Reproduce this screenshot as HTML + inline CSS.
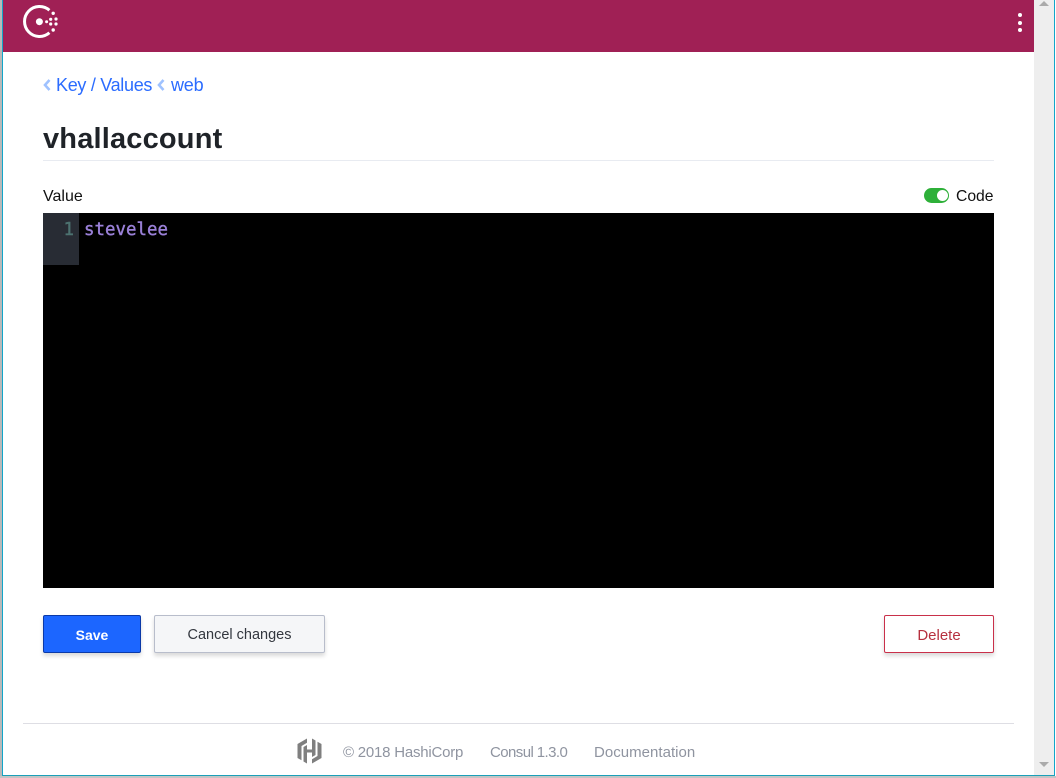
<!DOCTYPE html>
<html><head><meta charset="utf-8"><style>
html,body{margin:0;padding:0;width:1056px;height:778px;overflow:hidden;background:#fff;font-family:"Liberation Sans",sans-serif}
div,a,span{position:absolute;white-space:nowrap}
.t{line-height:20px}
.btn{box-sizing:border-box;border-radius:2px;box-shadow:0 3px 4px rgba(0,0,0,.15);text-align:center;font-size:14.5px;font-weight:400}
</style></head><body>
<div style="left:0;top:0;width:1056px;height:778px;background:#fff"></div>
<div style="left:0;top:0;width:2px;height:778px;background:#b9b9b9"></div>
<div style="left:2px;top:0;width:1px;height:776px;background:#12a5c9"></div>
<div style="left:1054px;top:0;width:1px;height:776px;background:#12a5c9"></div>
<div style="left:2px;top:775px;width:1053px;height:1px;background:#1a9fb8"></div>
<div style="left:0;top:776px;width:1056px;height:2px;background:#c4c4c4"></div>
<div style="left:1034px;top:0;width:20px;height:775px;background:#eeeeee"></div>
<svg style="position:absolute;left:1034px;top:0" width="20" height="775"><path d="M5 6L10 1L15 6Z" fill="#aaa"/><path d="M5 762L15 762L10 767Z" fill="#aaa"/></svg>
<div style="left:3px;top:0;width:1031px;height:52px;background:#a02055"></div>
<svg style="position:absolute;left:20px;top:2px" width="42" height="38" viewBox="0 0 42 38">
<path d="M29.4 8.2A15 15 0 1 0 29.4 30.8" fill="none" stroke="#fff" stroke-width="3"/>
<circle cx="19.4" cy="19.7" r="3.5" fill="#fff"/><circle cx="26.6" cy="19.7" r="1.5" fill="#fff"/>
<circle cx="33.2" cy="11.3" r="1.7" fill="#fff"/><circle cx="30.7" cy="17.3" r="1.6" fill="#fff"/><circle cx="36" cy="17" r="1.6" fill="#fff"/>
<circle cx="30.7" cy="22" r="1.6" fill="#fff"/><circle cx="36" cy="22" r="1.6" fill="#fff"/><circle cx="33.2" cy="28" r="1.7" fill="#fff"/>
</svg>
<svg style="position:absolute;left:1015px;top:12px" width="10" height="22"><circle cx="5" cy="3" r="2" fill="#fff"/><circle cx="5" cy="11" r="2" fill="#fff"/><circle cx="5" cy="18" r="2" fill="#fff"/></svg>

<svg style="position:absolute;left:43px;top:78px" width="10" height="14"><path d="M6.5 2L2 7L6.5 12" fill="none" stroke="#9fc2ff" stroke-width="2.6"/></svg>
<div class="t" style="left:56px;top:75px;font-size:18px;color:#2b6cff;letter-spacing:-.3px">Key / Values</div>
<svg style="position:absolute;left:157px;top:78px" width="10" height="14"><path d="M6.5 2L2 7L6.5 12" fill="none" stroke="#9fc2ff" stroke-width="2.6"/></svg>
<div class="t" style="left:171px;top:75px;font-size:18px;color:#2b6cff;letter-spacing:-.2px">web</div>
<div style="left:43px;top:121px;font-size:29px;line-height:36px;font-weight:700;color:#1f2328;letter-spacing:.18px">vhallaccount</div>
<div style="left:43px;top:160px;width:951px;height:1px;background:#e8ebf1"></div>

<div class="t" style="left:43px;top:187px;font-size:16px;color:#111">Value</div>
<div style="left:924px;top:188px;width:25px;height:15px;border-radius:8px;background:#2eb039"></div>
<div style="left:937px;top:190px;width:11px;height:11px;border-radius:50%;background:#fff"></div>
<div class="t" style="left:956px;top:187px;font-size:15.7px;color:#111">Code</div>

<div style="left:43px;top:213px;width:951px;height:375px;background:#000"></div>
<div style="left:43px;top:213px;width:36px;height:52px;background:#282c34"></div>
<div style="left:43px;top:220px;width:31px;text-align:right;font:400 17.44px/20px 'DejaVu Sans Mono',monospace;color:#4d7270;-webkit-text-stroke:.4px #4d7270">1</div>
<div style="left:84px;top:220px;font:400 17.44px/20px 'DejaVu Sans Mono',monospace;color:#9a80d8;-webkit-text-stroke:.4px #9a80d8">stevelee</div>

<div class="btn" style="left:43px;top:615px;width:98px;height:38px;background:#1c66ff;border:1px solid #0b3aa8;color:#fff;font-weight:700;font-size:14px;line-height:39px">Save</div>
<div class="btn" style="left:154px;top:615px;width:171px;height:38px;background:#f5f6f8;border:1px solid #b8bdcb;color:#33373f;line-height:39px">Cancel changes</div>
<div class="btn" style="left:884px;top:615px;width:110px;height:38px;background:#fff;border:1px solid #c9304a;color:#b6303f;line-height:39px;font-size:15px">Delete</div>

<div style="left:23px;top:723px;width:991px;height:1px;background:#dedee4"></div>
<svg style="position:absolute;left:296px;top:737px" width="27" height="28" viewBox="0 0 27 28" fill="#7f7f7f">
<path d="M11 1.5L1.5 7V21L5.5 23.3V9L11 5.8Z"/><path d="M16 26.5L25.5 21V7L21.5 4.7V19L16 22.2Z"/><path d="M7.5 10L11 8V12.5H16V1.5L19.5 3.5V18L16 20V15.5H11V26.5L7.5 24.5Z"/>
</svg>
<div class="t" style="left:343px;top:743px;font-size:15px;color:#8f94a0;letter-spacing:-.22px">© 2018 HashiCorp</div>
<div class="t" style="left:490px;top:743px;font-size:15px;color:#8f94a0;letter-spacing:-.58px">Consul 1.3.0</div>
<div class="t" style="left:594px;top:743px;font-size:15px;color:#8f94a0;letter-spacing:.03px">Documentation</div>
</body></html>
